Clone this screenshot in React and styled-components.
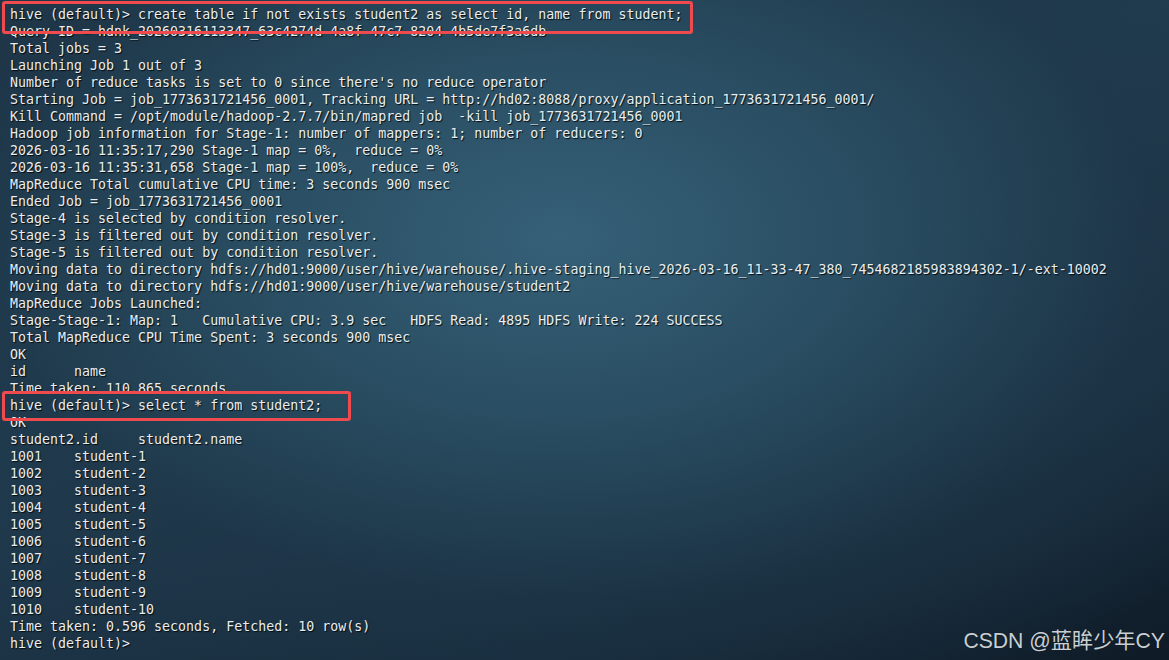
import React from "react";
import styled, { createGlobalStyle } from "styled-components";

const Global = createGlobalStyle`
  html, body { margin: 0; padding: 0; background: #142636; }
  #root { width: 1169px; height: 660px; }
`;

const Screen = styled.div`
  position: relative;
  width: 1169px;
  height: 660px;
  overflow: hidden;
  box-sizing: border-box;
  padding: 5.5px 0 0 10px;
  background:
    radial-gradient(ellipse 72% 78% at 48% 36%, rgba(54, 98, 122, 0.95) 0%, rgba(43, 80, 101, 0.9) 35%, rgba(30, 55, 73, 0.6) 70%, rgba(12, 24, 35, 0) 100%),
    linear-gradient(160deg, #1e3547 0%, #223d51 40%, #182d3e 75%, #0f1b27 100%);
`;

const Output = styled.div`
  display: flex;
  flex-direction: column;
  font-family: "DejaVu Sans Mono", "Liberation Mono", monospace;
  font-size: 13.3px;
  line-height: 17px;
  color: #e9eef0;
  text-shadow: 1px 1px 1px rgba(0, 0, 0, 0.85);
`;

const Line = styled.div`
  position: relative;
  white-space: pre;
  height: 17px;
  &::after {
    content: "";
    display: ${(p) => (p.$box ? "block" : "none")};
    position: absolute;
    left: -8px;
    top: ${(p) => (p.$box ? p.$box.top : 0)}px;
    width: ${(p) => (p.$box ? p.$box.width : 0)}px;
    height: ${(p) => (p.$box ? p.$box.height : 0)}px;
    border: 3px solid #ef4a4d;
    border-radius: 3px;
    box-sizing: border-box;
    z-index: 2;
  }
`;

const Watermark = styled.div`
  position: absolute;
  right: 4px;
  bottom: 6px;
  font-family: "Liberation Sans", "Noto Sans CJK SC", sans-serif;
  font-size: 21.2px;
  color: #c9cfd3;
  text-shadow: 0 0 1px rgba(0, 0, 0, 0.4);
`;

const lines = [
  { t: "hive (default)> create table if not exists student2 as select id, name from student;", box: { top: -4.5, width: 691, height: 33 } },
  { t: "Query ID = hdnk_20260316113347_63c4274d-4a8f-47c7-8204-4b5de7f3a6db" },
  { t: "Total jobs = 3" },
  { t: "Launching Job 1 out of 3" },
  { t: "Number of reduce tasks is set to 0 since there's no reduce operator" },
  { t: "Starting Job = job_1773631721456_0001, Tracking URL = http://hd02:8088/proxy/application_1773631721456_0001/" },
  { t: "Kill Command = /opt/module/hadoop-2.7.7/bin/mapred job  -kill job_1773631721456_0001" },
  { t: "Hadoop job information for Stage-1: number of mappers: 1; number of reducers: 0" },
  { t: "2026-03-16 11:35:17,290 Stage-1 map = 0%,  reduce = 0%" },
  { t: "2026-03-16 11:35:31,658 Stage-1 map = 100%,  reduce = 0%" },
  { t: "MapReduce Total cumulative CPU time: 3 seconds 900 msec" },
  { t: "Ended Job = job_1773631721456_0001" },
  { t: "Stage-4 is selected by condition resolver." },
  { t: "Stage-3 is filtered out by condition resolver." },
  { t: "Stage-5 is filtered out by condition resolver." },
  { t: "Moving data to directory hdfs://hd01:9000/user/hive/warehouse/.hive-staging_hive_2026-03-16_11-33-47_380_7454682185983894302-1/-ext-10002" },
  { t: "Moving data to directory hdfs://hd01:9000/user/hive/warehouse/student2" },
  { t: "MapReduce Jobs Launched:" },
  { t: "Stage-Stage-1: Map: 1   Cumulative CPU: 3.9 sec   HDFS Read: 4895 HDFS Write: 224 SUCCESS" },
  { t: "Total MapReduce CPU Time Spent: 3 seconds 900 msec" },
  { t: "OK" },
  { t: "id      name" },
  { t: "Time taken: 110.865 seconds" },
  { t: "hive (default)> select * from student2;", box: { top: -5.5, width: 349, height: 30 } },
  { t: "OK" },
  { t: "student2.id     student2.name" },
  ...Array.from({ length: 10 }, (_, i) => ({ t: `${1001 + i}    student-${i + 1}` })),
  { t: "Time taken: 0.596 seconds, Fetched: 10 row(s)" },
  { t: "hive (default)>" },
];

export default function App() {
  return (
    <>
      <Global />
      <Screen>
        <Output>
          {lines.map((l, i) => (
            <Line key={i} $box={l.box}>
              {l.t}
            </Line>
          ))}
        </Output>
        <Watermark>CSDN @蓝眸少年CY</Watermark>
      </Screen>
    </>
  );
}
